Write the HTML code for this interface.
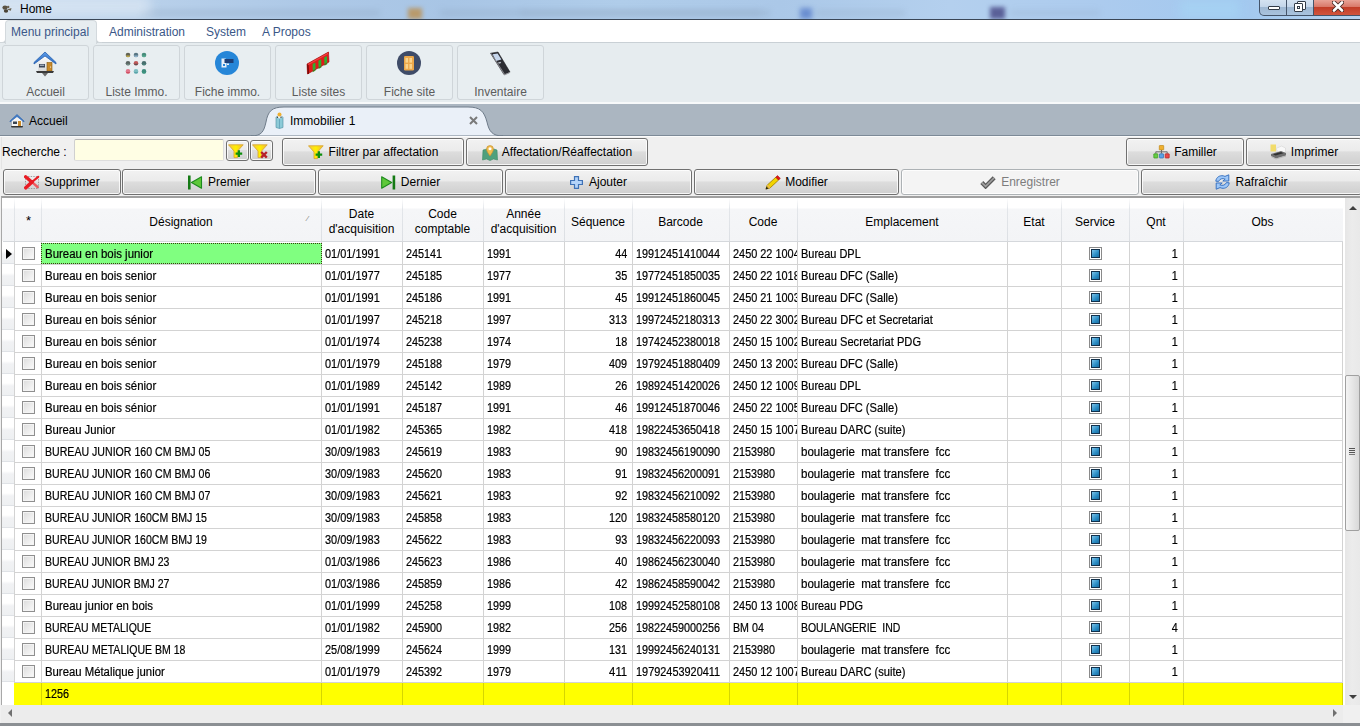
<!DOCTYPE html><html><head><meta charset="utf-8"><title>Home</title><style>*{box-sizing:border-box}
html,body{margin:0;padding:0}
body{width:1360px;height:726px;overflow:hidden;position:relative;background:#f0f0f0;font-family:"Liberation Sans",sans-serif;font-size:12px;color:#000}
div,span,svg{position:absolute}
#title{left:0;top:0;width:1360px;height:19px;background:linear-gradient(90deg,#c4d8ee 0px,#b8d0ea 150px,#aec9e7 300px,#a8c5e5 450px,#b0cdea 620px,#abc8e8 780px,#b4d0ee 950px,#accbee 1100px,#a2c8ef 1240px,#b6d3f0 1360px)}
#title .line{left:0;top:19px;width:1360px;height:1px;background:#3a4656}
#title .t{left:20px;top:2px;font-size:12px;color:#000;line-height:14px}
.wbtn{top:0;height:16px;border:1px solid #44546a;border-top:none}
#menubar{left:0;top:20px;width:1360px;height:23px;background:#fff}
.mtab{top:20px;height:23px;font-size:12px;color:#3a5788;line-height:15px;padding-top:5px}
#ribbon{left:0;top:42px;width:1360px;height:61px;background:#e6ecef;border-top:1px solid #c9d0d5}
.rbtn{top:45px;width:87px;height:55px;border:1px solid #cfd5d9;border-radius:3px;background:#e8eef1}
.rbtn .lbl{left:0;top:39px;width:85px;text-align:center;font-size:12px;color:#5c5c5c;line-height:14px}
#ribline{left:0;top:102px;width:1360px;height:2px;background:#f7f9fa}
#tabstrip{left:0;top:104px;width:1360px;height:32px;background:#abb6c1}
#tabline{left:0;top:135px;width:1360px;height:1px;background:#7d8a97}
#search{left:0;top:136px;width:1360px;height:32px;background:#f0f0f0}
.btn{border:1px solid #707070;border-radius:3px;background:linear-gradient(#f2f2f2 0,#ebebeb 45%,#dddddd 50%,#cfcfcf 100%);box-shadow:inset 0 0 0 1px rgba(255,255,255,.8)}
.btn .bl{left:0;width:100%;display:flex;justify-content:center;align-items:center;font-size:12px;line-height:14px;white-space:nowrap}
.bl>*{position:relative}
.bl svg{display:block}
.btn.dis{border-color:#adb2b5;background:#f4f4f4}
#gridbox{left:1px;top:196px;width:1359px;height:527px;border-top:2px solid #a0a0a0;border-left:1px solid #a8a8a8;background:#fff}
.hdr{background:linear-gradient(#ffffff 0,#ffffff 10px,#f5f6f8 11px,#f3f4f6 100%)}
.ht{top:198px;height:43px;text-align:center;font-size:12px;line-height:14px;padding-top:17px;color:#000}
.ht.two{padding-top:9px;line-height:15px}
.hsep{top:198px;width:1px;height:43px;background:linear-gradient(#ffffff,#e3e6ea 25%,#dcdfe3)}
.sorti{left:307px;top:214px;font-size:8px;color:#777}
.rowh{left:2px;width:12px;height:21px;background:linear-gradient(#fff 0,#fff 40%,#f1f2f4 55%,#eef0f2 100%);border-bottom:1px solid #dfe2e6}
.sel{left:41px;width:281px;height:21px;background:#80ff80;border:1px dotted #3a3a10;z-index:1}
.arrow{left:6px;width:0;height:0;border-left:6px solid #000;border-top:5.5px solid transparent;border-bottom:5.5px solid transparent}
.cb{left:22px;width:13px;height:13px;border:1px solid #8f8f8f;background:linear-gradient(135deg,#dcdcdc,#fbfbfb);box-shadow:inset 0 0 0 1px #f4f4f4}
.c{z-index:2;-webkit-text-stroke:0.2px #000;height:21px;line-height:21px;font-size:12px;white-space:nowrap;overflow:hidden;color:#000}
.tl{left:3px;top:1px;transform-origin:0 50%}
.tr{right:5px;top:1px;transform-origin:100% 50%}
.svc{left:1089px;width:13px;height:13px;border:1px solid #8a8a8a;background:#fff}
.svc::after{content:"";position:absolute;left:1px;top:1px;width:9px;height:9px;background:linear-gradient(135deg,#7cc4ea,#2a8cc4 60%,#1c6ea0);border:1px solid #10304c;box-sizing:border-box}
.hl{left:14px;width:1329px;height:1px;background:#d3d3d3}
.vl{width:1px;background:#d3d3d3}
.tot{left:14px;width:1329px;height:22px;background:#ffff00}
.vly{width:1px;height:22px;background:#d6d600}
</style></head><body><div id="title"><div style="left:0;top:0;width:1360px;height:19px;overflow:hidden"><div style="left:140px;top:10px;width:240px;height:6px;background:#8ea6c0;filter:blur(3px);opacity:.38"></div><div style="left:440px;top:10px;width:330px;height:6px;background:#8ea6c0;filter:blur(3px);opacity:.38"></div><div style="left:520px;top:10px;width:240px;height:6px;background:#8ea6c0;filter:blur(3px);opacity:.25"></div><div style="left:815px;top:10px;width:90px;height:6px;background:#8ea6c0;filter:blur(3px);opacity:.3"></div><div style="left:1010px;top:10px;width:90px;height:6px;background:#8ea6c0;filter:blur(3px);opacity:.255"></div><div style="left:408px;top:8px;width:14px;height:11px;background:#b89a6c;filter:blur(2px)"></div><div style="left:990px;top:7px;width:15px;height:12px;background:#5a6098;filter:blur(2px)"></div><div style="left:800px;top:8px;width:12px;height:11px;background:#6a8ed0;filter:blur(2.5px)"></div><div style="left:1180px;top:0;width:60px;height:19px;background:#a6d4f4;filter:blur(4px);opacity:.7"></div><div style="left:-10px;top:-4px;width:160px;height:20px;background:#dce8f4;filter:blur(6px);opacity:.75"></div></div><svg style="left:1px;top:3px" width="12" height="12" viewBox="0 0 12 12"><ellipse cx="4" cy="4.6" rx="2.6" ry="2.2" fill="#5a5244"/><ellipse cx="5" cy="8" rx="2.2" ry="1.8" fill="#4a4438"/><path d="M6 6.5 L10.5 5 L9.8 7.8 Z" fill="#6a6252"/><circle cx="7.2" cy="4" r="1.2" fill="#6a6252"/></svg><div class="t">Home</div><div class="line"></div>
<div class="wbtn" style="left:1259px;width:28px;border-radius:0 0 0 5px;background:linear-gradient(#d4e2f1 0,#c4d6ea 45%,#9fb8d3 50%,#a9c3de 100%)"><div style="left:8px;top:6px;width:12px;height:4px;background:#fff;border:1px solid #333c48;border-radius:1px"></div></div>
<div class="wbtn" style="left:1286px;width:28px;border-left:1px solid #44546a;background:linear-gradient(#d4e2f1 0,#c4d6ea 45%,#9fb8d3 50%,#a9c3de 100%)"><div style="left:10px;top:1px;width:9px;height:9px;background:#fff;border:1px solid #333c48;border-radius:1px"></div><div style="left:7px;top:3px;width:9px;height:9px;background:#fff;border:1px solid #333c48;border-radius:1px"></div><div style="left:10px;top:6px;width:3px;height:3px;border:1px solid #333c48"></div></div>
<div class="wbtn" style="left:1313px;width:48px;border-radius:0;background:linear-gradient(#e8a397 0,#d9796a 45%,#c23d28 50%,#d0553e 100%)"><svg style="left:18px;top:1px" width="12" height="11" viewBox="0 0 12 11"><path d="M2 1.5 L10 9.5 M10 1.5 L2 9.5" stroke="#4a2a26" stroke-width="4.4" stroke-linecap="round"/><path d="M2 1.5 L10 9.5 M10 1.5 L2 9.5" stroke="#fff" stroke-width="2.6" stroke-linecap="round"/></svg></div>
</div>
<div id="menubar"></div>
<div id="ribbon"></div>
<div style="left:0;top:38px;width:6px;height:5px;background:#fff;border-radius:0 0 4px 0;border-bottom:1px solid #d0d6da;border-right:1px solid #d0d6da"></div><div style="left:96px;top:38px;width:6px;height:5px;background:#fff;border-radius:0 0 0 4px;border-bottom:1px solid #d0d6da;border-left:1px solid #d0d6da"></div>
<div style="left:5px;top:20px;width:92px;height:24px;background:#e7edf0;border:1px solid #d3d9dd;border-bottom:none;border-radius:4px 4px 0 0"></div>
<div class="mtab" style="left:11px">Menu principal</div>
<div class="mtab" style="left:109px">Administration</div>
<div class="mtab" style="left:206px">System</div>
<div class="mtab" style="left:262px">A Propos</div>
<div class="rbtn" style="left:2px"><div class="lbl">Accueil</div></div>
<div class="rbtn" style="left:93px"><div class="lbl">Liste Immo.</div></div>
<div class="rbtn" style="left:184px"><div class="lbl">Fiche immo.</div></div>
<div class="rbtn" style="left:275px"><div class="lbl">Liste sites</div></div>
<div class="rbtn" style="left:366px"><div class="lbl">Fiche site</div></div>
<div class="rbtn" style="left:457px"><div class="lbl">Inventaire</div></div>
<div id="ribline"></div>
<div id="tabstrip"></div>
<div id="tabline"></div>
<div style="left:29px;top:114px;font-size:12px;line-height:14px;color:#000">Accueil</div>
<svg style="left:0;top:104px" width="520" height="33" viewBox="0 104 520 33"><path d="M251 136 C262 136 264 131 266 122 C268 111 272 107 284 107 L468 107 C480 107 484 111 487 122 C489 131 492 136 503 136 Z" fill="#eaf0f8" stroke="#6f7c8a" stroke-width="1"/></svg>
<div style="left:290px;top:114px;font-size:12px;line-height:14px;color:#000">Immobilier 1</div>
<svg style="left:469px;top:116px" width="9" height="9" viewBox="0 0 9 9"><path d="M1 1 L8 8 M8 1 L1 8" stroke="#7a7a7a" stroke-width="2"/></svg>
<div id="search"></div><div style="left:0;top:136px;width:1360px;height:1px;background:#fbfbfb"></div><div style="left:1px;top:137px;width:1px;height:32px;background:#e4e4e4"></div><div style="left:2px;top:145px;font-size:12px;line-height:14px">Recherche :</div><div style="left:74px;top:139px;width:150px;height:22px;background:#fffee4;border:1px solid #dedede;border-top-color:#b4b4b4;border-left-color:#d0d0d0;border-radius:2px"></div><div class="btn" style="left:226px;top:140px;width:23px;height:21px"><span style="left:1px;top:3px"><svg width="16" height="15" viewBox="0 0 16 15"><defs><linearGradient id="fy" x1="0" y1="0" x2="1" y2="0"><stop offset="0" stop-color="#f6c640"/><stop offset=".5" stop-color="#fff000"/><stop offset="1" stop-color="#f2b838"/></linearGradient></defs><path d="M0.5 0.8 H15.2 L9.6 7 V13.6 H6 V7 Z" fill="url(#fy)" stroke="#d9a838" stroke-width="0.9"/><path d="M7.6 9.6 H14.2 M10.9 6.3 V13" stroke="#0b8f0b" stroke-width="2.2"/></svg></span></div><div class="btn" style="left:250px;top:140px;width:23px;height:21px"><span style="left:1px;top:3px"><svg width="16" height="15" viewBox="0 0 16 15"><path d="M0.5 0.8 H15.2 L9.6 7 V13.6 H6 V7 Z" fill="url(#fy)" stroke="#d9a838" stroke-width="0.9"/><path d="M9.2 8 L14.8 13.6 M14.8 8 L9.2 13.6" stroke="#b8202a" stroke-width="2.4"/></svg></span></div><div class="btn" style="left:282px;top:138px;width:182px;height:28px"><div class="bl" style="top:0px;height:26px;padding-left:0px"><span style="width:16px;height:15px;top:0px"><svg width="16" height="15" viewBox="0 0 16 15"><defs><linearGradient id="fy" x1="0" y1="0" x2="1" y2="0"><stop offset="0" stop-color="#f6c640"/><stop offset=".5" stop-color="#fff000"/><stop offset="1" stop-color="#f2b838"/></linearGradient></defs><path d="M0.5 0.8 H15.2 L9.6 7 V13.6 H6 V7 Z" fill="url(#fy)" stroke="#d9a838" stroke-width="0.9"/><path d="M7.6 9.6 H14.2 M10.9 6.3 V13" stroke="#0b8f0b" stroke-width="2.2"/></svg></span><span style="margin-left:5px;">Filtrer par affectation</span></div></div><div class="btn" style="left:466px;top:138px;width:182px;height:28px"><div class="bl" style="top:0px;height:26px;padding-left:0px"><span style="width:16px;height:17px;top:0px"><svg width="16" height="17" viewBox="0 0 16 17"><path d="M1 6 L5 5 L8 6.5 L12 5 L15 6 L15.5 16 L11.5 15 L8 16.5 L4.5 15 L0.5 16 Z" fill="#4fa07c" stroke="#3d8a68" stroke-width="0.6"/><path d="M8 12 C6 9 4.6 7.4 4.6 5 A3.4 3.4 0 0 1 11.4 5 C11.4 7.4 10 9 8 12 Z" fill="#f0be50" stroke="#c89030" stroke-width="0.7"/><circle cx="8" cy="4.8" r="1.5" fill="#fff"/></svg></span><span style="margin-left:4px;">Affectation/Réaffectation</span></div></div><div class="btn" style="left:1126px;top:138px;width:118px;height:28px"><div class="bl" style="top:0px;height:26px;padding-left:0px"><span style="width:17px;height:14px;top:0px"><svg width="17" height="14" viewBox="0 0 17 14"><rect x="6.3" y="0.5" width="4.4" height="4.4" rx="0.4" fill="#f0b030" stroke="#c08a18" stroke-width="0.7"/><path d="M8.5 5 V6.8 M2.8 8.6 V6.8 H14.2 V8.6 M8.5 6.8 V8.6" fill="none" stroke="#606060" stroke-width="0.9"/><rect x="0.8" y="8.8" width="4" height="4.2" rx="0.4" fill="#66cc44" stroke="#3a9a20" stroke-width="0.7"/><rect x="6.5" y="8.8" width="4" height="4.2" rx="0.4" fill="#5aa2e6" stroke="#2f6fb0" stroke-width="0.7"/><rect x="12.2" y="8.8" width="4" height="4.2" rx="0.4" fill="#ea4a4a" stroke="#b02020" stroke-width="0.7"/></svg></span><span style="margin-left:4px;">Familler</span></div></div><div class="btn" style="left:1246px;top:138px;width:116px;height:28px"><div class="bl" style="top:0px;height:26px;padding-left:0px"><span style="width:17px;height:16px;top:0px"><svg width="17" height="16" viewBox="0 0 17 16"><rect x="0.5" y="0.5" width="5.5" height="7" fill="#f2dc6a"/><path d="M6 4.5 L11.5 2 L15.5 4 L15.5 8 L9 10 Z" fill="#f8f8f8" stroke="#cfcfcf" stroke-width="0.5"/><path d="M1 10 L11 7 L16 9 L16 11.5 L6 14.5 L1 12 Z" fill="#6e6e6e"/><path d="M3 10.2 L11 8 L13.5 9.2 L5.5 11.4 Z" fill="#303030"/><path d="M1 12 L6 14.5 L16 11.5 L16 12.5 L6 15.5 L1 13 Z" fill="#b8b8b8"/></svg></span><span style="margin-left:4px;">Imprimer</span></div></div><div class="btn" style="left:3px;top:169px;width:118px;height:26px"><div class="bl" style="top:0px;height:24px;padding-left:0px"><span style="width:16px;height:15px;top:0px"><svg width="16" height="15" viewBox="0 0 16 15"><rect x="1.5" y="1.5" width="13" height="12" fill="none" stroke="#8a8a8a" stroke-width="0.8" stroke-dasharray="1.4 1.2"/><path d="M1.6 1.8 L8 7.2" stroke="#e81c24" stroke-width="3.4" stroke-linecap="round"/><path d="M8 7.2 L13.6 12" stroke="#ee5a60" stroke-width="2.4" stroke-linecap="round"/><path d="M1.8 12.8 L8 7" stroke="#e81c24" stroke-width="3.6" stroke-linecap="round"/><path d="M8 7 L14.2 1.8" stroke="#e81c24" stroke-width="2.2" stroke-linecap="round"/></svg></span><span style="margin-left:4px;">Supprimer</span></div></div><div class="btn" style="left:122px;top:169px;width:194px;height:26px"><div class="bl" style="top:0px;height:24px;padding-left:0px"><span style="width:15px;height:15px;top:0px"><svg width="15" height="15" viewBox="0 0 15 15"><rect x="0" y="0.5" width="2.6" height="14" fill="#157a15"/><path d="M3.5 7.5 L13.5 1.8 L13.5 13.2 Z" fill="#5ec83a" stroke="#1d8a1d" stroke-width="1.1" stroke-linejoin="round"/></svg></span><span style="margin-left:5px;">Premier</span></div></div><div class="btn" style="left:318px;top:169px;width:185px;height:26px"><div class="bl" style="top:0px;height:24px;padding-left:0px"><span style="width:15px;height:15px;top:0px"><svg width="15" height="15" viewBox="0 0 15 15"><rect x="11.6" y="0.5" width="2.6" height="14" fill="#157a15"/><path d="M10.7 7.5 L0.7 1.8 L0.7 13.2 Z" fill="#5ec83a" stroke="#1d8a1d" stroke-width="1.1" stroke-linejoin="round"/></svg></span><span style="margin-left:5px;">Dernier</span></div></div><div class="btn" style="left:505px;top:169px;width:187px;height:26px"><div class="bl" style="top:0px;height:24px;padding-left:0px"><span style="width:13px;height:13px;top:0px"><svg width="13" height="13" viewBox="0 0 13 13"><path d="M4.5 0.6 H8.5 V4.5 H12.4 V8.5 H8.5 V12.4 H4.5 V8.5 H0.6 V4.5 H4.5 Z" fill="#b4d4fa" stroke="#3f72b6" stroke-width="1.2"/></svg></span><span style="margin-left:6px;">Ajouter</span></div></div><div class="btn" style="left:694px;top:169px;width:205px;height:26px"><div class="bl" style="top:0px;height:24px;padding-left:0px"><span style="width:16px;height:15px;top:0px"><svg width="16" height="15" viewBox="0 0 16 15"><path d="M1 14 L2.2 10.2 L10.8 2.2 L13.6 5 L5 13 Z" fill="#f2d400" stroke="#a78300" stroke-width="0.9"/><path d="M2.2 10.2 L5 13" stroke="#e6b070" stroke-width="1.2"/><path d="M10.8 2.2 L12.5 0.6 L15.3 3.4 L13.6 5 Z" fill="#e01818" stroke="#a00" stroke-width="0.6"/><path d="M0.6 14.4 L1.5 11.6 L3.4 13.5 Z" fill="#222"/></svg></span><span style="margin-left:4px;">Modifier</span></div></div><div class="btn dis" style="left:901px;top:169px;width:238px;height:26px"><div class="bl" style="top:0px;height:24px;padding-left:0px"><span style="width:16px;height:13px;top:0px"><svg width="16" height="13" viewBox="0 0 16 13"><path d="M1.8 6.6 L5.6 10.4 L14.2 1.8" fill="none" stroke="#5a5a5a" stroke-width="4.2" stroke-linejoin="miter"/><path d="M1.8 6.6 L5.6 10.4 L14.2 1.8" fill="none" stroke="#a0a0a0" stroke-width="1.6"/></svg></span><span style="margin-left:5px;color:#7d7d7d;">Enregistrer</span></div></div><div class="btn" style="left:1141px;top:169px;width:221px;height:26px"><div class="bl" style="top:0px;height:24px;padding-left:0px"><span style="width:15px;height:16px;top:0px"><svg width="15" height="16" viewBox="0 0 15 16"><path d="M0.8 7.2 C1.2 3.2 4.6 1.2 8.2 1.8 L10 2.4 L13.8 0.8 L13.8 7 L7.8 7 L10.2 5.1 C7.4 3.9 4.6 4.9 3.6 7.4 Z" fill="#9dc7f8" stroke="#3a73c1" stroke-width="1"/><path d="M14.2 8.8 C13.8 12.8 10.4 14.8 6.8 14.2 L5 13.6 L1.2 15.2 L1.2 9 L7.2 9 L4.8 10.9 C7.6 12.1 10.4 11.1 11.4 8.6 Z" fill="#9dc7f8" stroke="#3a73c1" stroke-width="1"/></svg></span><span style="margin-left:5px;">Rafraîchir</span></div></div><div id="gridbox"></div><svg style="left:33px;top:50px" width="25" height="28" viewBox="0 0 25 28"><defs><linearGradient id="hb" x1="0" y1="0" x2="0" y2="1"><stop offset="0" stop-color="#ffffff"/><stop offset="1" stop-color="#d8d8d8"/></linearGradient><linearGradient id="rf" x1="0" y1="0" x2="0" y2="1"><stop offset="0" stop-color="#5b9ae6"/><stop offset="1" stop-color="#2c6cc4"/></linearGradient></defs><path d="M5 11 L12 5.5 L19 11 V21 H5 Z" fill="url(#hb)"/><path d="M1 12.5 L12 2 L23 12.5 L23 14 L12 6 L1 14 Z" fill="url(#rf)" stroke="#2a62b0" stroke-width="0.8" stroke-linejoin="round"/><rect x="6" y="14" width="6" height="3.5" fill="#3b4658"/><rect x="6.8" y="14.7" width="4.4" height="1" fill="#c8d0dc"/><rect x="14" y="12.5" width="5" height="8.5" fill="#c98a2a" stroke="#8a5a10" stroke-width="0.6"/><circle cx="17.6" cy="17" r="0.6" fill="#fff"/><path d="M3 21 H21 L20 23 H4 Z" fill="#3a3a3a"/><path d="M9 23 H15 L12 26.5 Z" fill="#6a6a6a"/></svg><svg style="left:124px;top:51px" width="24" height="24" viewBox="0 0 24 24"><circle cx="4" cy="4.0" r="2.3" fill="#4a4a3a" opacity="0.85"/><path d="M1.9 4.6 A2.2 2.2 0 0 0 6.1 4.6 Z" fill="#e8c840" opacity="0.7"/><circle cx="12" cy="4.0" r="2.3" fill="#3f6070" opacity="0.85"/><path d="M9.9 4.6 A2.2 2.2 0 0 0 14.1 4.6 Z" fill="#a8d0f0" opacity="0.7"/><circle cx="20" cy="4.0" r="2.3" fill="#2a7a66" opacity="0.85"/><path d="M17.9 4.6 A2.2 2.2 0 0 0 22.1 4.6 Z" fill="#5ab89a" opacity="0.7"/><circle cx="4" cy="12.2" r="2.3" fill="#404a48" opacity="0.85"/><path d="M1.9 12.799999999999999 A2.2 2.2 0 0 0 6.1 12.799999999999999 Z" fill="#7a9a90" opacity="0.7"/><circle cx="12" cy="12.2" r="2.3" fill="#b83c3c" opacity="0.85"/><path d="M9.9 12.799999999999999 A2.2 2.2 0 0 0 14.1 12.799999999999999 Z" fill="#3a4a50" opacity="0.7"/><circle cx="20" cy="12.2" r="2.3" fill="#2a5656" opacity="0.85"/><path d="M17.9 12.799999999999999 A2.2 2.2 0 0 0 22.1 12.799999999999999 Z" fill="#4a8a80" opacity="0.7"/><circle cx="4" cy="20.4" r="2.3" fill="#e0607a" opacity="0.85"/><path d="M1.9 21.0 A2.2 2.2 0 0 0 6.1 21.0 Z" fill="#c84050" opacity="0.7"/><circle cx="12" cy="20.4" r="2.3" fill="#6ab4b8" opacity="0.85"/><path d="M9.9 21.0 A2.2 2.2 0 0 0 14.1 21.0 Z" fill="#4a9aa0" opacity="0.7"/><circle cx="20" cy="20.4" r="2.3" fill="#1f7a68" opacity="0.85"/><path d="M17.9 21.0 A2.2 2.2 0 0 0 22.1 21.0 Z" fill="#3a9a80" opacity="0.7"/></svg><svg style="left:214px;top:50px" width="26" height="26" viewBox="0 0 26 26"><circle cx="13" cy="13" r="12" fill="#2686d8"/><path d="M7.5 8.5 H11.5 L12.5 9.5 V17.5 H7.5 Z" fill="#e8f0f8"/><rect x="10.5" y="9" width="9" height="4" fill="#1c3f78"/><rect x="9" y="14" width="2" height="2" fill="#2686d8"/><rect x="13" y="13.5" width="2" height="1.5" fill="#e8f0f8"/></svg><svg style="left:305px;top:50px" width="26" height="26" viewBox="0 0 26 26"><path d="M2 14 L23.5 2 L24 12 L2.5 24 Z" fill="#e01a1a"/><path d="M2 14 L23.5 2 L24 3.5 L3.5 15 Z" fill="#f24040"/><path d="M2 14 L3.5 15 L4 24 L2.5 24 Z" fill="#6a0808"/><path d="M7.6 14 L10.4 12.5 L10.6 20.6 L7.8 22.2 Z" fill="#2fae2f"/><path d="M13.4 10.8 L16.2 9.3 L16.4 17.4 L13.6 19 Z" fill="#2fae2f"/><path d="M19.2 7.6 L22 6.1 L22.2 14.2 L19.4 15.8 Z" fill="#2fae2f"/><path d="M2 14 L23.5 2 L24 12 L2.5 24 Z" fill="none" stroke="#9a0c0c" stroke-width="0.6"/></svg><svg style="left:396px;top:50px" width="26" height="26" viewBox="0 0 26 26"><circle cx="13" cy="13" r="12" fill="#3f4c68"/><rect x="8" y="6" width="10" height="14.5" rx="1.2" fill="#eda84a"/><rect x="9.5" y="8" width="2.6" height="4.6" fill="#fbd48c"/><rect x="13.4" y="8" width="2.6" height="4.6" fill="#fbd48c"/><rect x="9.5" y="14" width="2.6" height="4.8" fill="#fbd48c"/><rect x="13.4" y="14" width="2.6" height="4.8" fill="#fbd48c"/></svg><svg style="left:488px;top:50px" width="24" height="26" viewBox="0 0 24 26"><path d="M2.5 3.2 L10 2 L22 22 L16 24.6 Z" fill="#2c2c32" stroke="#141418" stroke-width="0.5"/><path d="M4.6 4.2 L9.6 3.4 L13.4 9.6 L8 11 Z" fill="#c6d6ec"/><path d="M2.5 3.2 L3.6 3.6 L17 24.2 L16 24.6 Z" fill="#8a8a90"/><path d="M10 12.5 L12.5 11.8 L13.2 13 L10.8 13.8 Z" fill="#bfc4cc"/><path d="M16 24.6 L22 22 L22.3 22.8 L16.4 25.4 Z" fill="#9a9aa0"/></svg><svg style="left:9px;top:113px" width="16" height="16" viewBox="0 0 16 16"><path d="M3 7 L8 3 L13 7 V13 H3 Z" fill="#f4f4f4"/><path d="M1 8 L8 1.5 L15 8 L15 9 L8 3.5 L1 9 Z" fill="#3f7fd0" stroke="#2a5fa8" stroke-width="0.6"/><rect x="4" y="8.5" width="4" height="2.5" fill="#3a4450"/><rect x="9" y="8" width="3" height="5" fill="#c98a2a"/><path d="M2 13 H14 L13.5 14.5 H2.5 Z" fill="#333"/></svg><svg style="left:274px;top:112px" width="11" height="17" viewBox="0 0 11 17"><path d="M2 5 L5.5 3.5 L9 5 V15.5 L5.5 16.5 L2 15.5 Z" fill="#8ccad8" stroke="#4a8aa0" stroke-width="0.6"/><path d="M5.5 6.5 V16.5" stroke="#5fa0b8" stroke-width="0.8"/><path d="M2 5 L5.5 6.5 L9 5 L5.5 3.5 Z" fill="#f0f4f4"/><circle cx="5.5" cy="2.5" r="2" fill="#f0b030"/><circle cx="3.5" cy="5.2" r="0.7" fill="#333"/><circle cx="7" cy="5.2" r="0.7" fill="#333"/></svg><div id="grid"><div class="hdr" style="left:2px;top:198px;width:1341px;height:43px"></div><div class="ht" style="left:14px;width:27px"><span style='font-size:13px;position:relative;top:-1px;left:1px'>*</span></div><div class="ht" style="left:41px;width:280px">Désignation</div><div class="ht two" style="left:321px;width:81px">Date<br>d'acquisition</div><div class="ht two" style="left:402px;width:81px">Code<br>comptable</div><div class="ht two" style="left:483px;width:81px">Année<br>d'acquisition</div><div class="ht" style="left:564px;width:68px">Séquence</div><div class="ht" style="left:632px;width:97px">Barcode</div><div class="ht" style="left:729px;width:68px">Code</div><div class="ht" style="left:797px;width:210px">Emplacement</div><div class="ht" style="left:1007px;width:54px">Etat</div><div class="ht" style="left:1061px;width:68px">Service</div><div class="ht" style="left:1129px;width:54px">Qnt</div><div class="ht" style="left:1183px;width:159px">Obs</div><div class="hsep" style="left:14px"></div><div class="hsep" style="left:41px"></div><div class="hsep" style="left:321px"></div><div class="hsep" style="left:402px"></div><div class="hsep" style="left:483px"></div><div class="hsep" style="left:564px"></div><div class="hsep" style="left:632px"></div><div class="hsep" style="left:729px"></div><div class="hsep" style="left:797px"></div><div class="hsep" style="left:1007px"></div><div class="hsep" style="left:1061px"></div><div class="hsep" style="left:1129px"></div><div class="hsep" style="left:1183px"></div><div class="sorti">&#8260;</div><div class="rowh" style="top:243px"></div><div class="sel" style="top:243px"></div><div class="arrow" style="top:249px"></div><div class="cb" style="top:247px"></div><div class="c" style="left:42px;top:243px;width:279px"><span class="tl" style="transform:scaleX(0.953)">Bureau en bois junior</span></div><div class="c" style="left:322px;top:243px;width:80px"><span class="tl" style="transform:scaleX(0.911)">01/01/1991</span></div><div class="c" style="left:403px;top:243px;width:80px"><span class="tl" style="transform:scaleX(0.900)">245141</span></div><div class="c" style="left:484px;top:243px;width:80px"><span class="tl" style="transform:scaleX(0.900)">1991</span></div><div class="c" style="left:565px;top:243px;width:67px"><span class="tr" style="transform:scaleX(0.900)">44</span></div><div class="c" style="left:633px;top:243px;width:96px"><span class="tl" style="transform:scaleX(0.900)">19912451410044</span></div><div class="c" style="left:730px;top:243px;width:67px"><span class="tl" style="transform:scaleX(0.909)">2450 22 1004</span></div><div class="c" style="left:798px;top:243px;width:209px"><span class="tl" style="transform:scaleX(0.914)">Bureau DPL</span></div><div class="c" style="left:1130px;top:243px;width:53px"><span class="tr" style="transform:scaleX(0.900)">1</span></div><div class="svc" style="top:247px"></div><div class="hl" style="top:264px"></div><div class="rowh" style="top:265px"></div><div class="cb" style="top:269px"></div><div class="c" style="left:42px;top:265px;width:279px"><span class="tl" style="transform:scaleX(0.953)">Bureau en bois senior</span></div><div class="c" style="left:322px;top:265px;width:80px"><span class="tl" style="transform:scaleX(0.911)">01/01/1977</span></div><div class="c" style="left:403px;top:265px;width:80px"><span class="tl" style="transform:scaleX(0.900)">245185</span></div><div class="c" style="left:484px;top:265px;width:80px"><span class="tl" style="transform:scaleX(0.900)">1977</span></div><div class="c" style="left:565px;top:265px;width:67px"><span class="tr" style="transform:scaleX(0.900)">35</span></div><div class="c" style="left:633px;top:265px;width:96px"><span class="tl" style="transform:scaleX(0.900)">19772451850035</span></div><div class="c" style="left:730px;top:265px;width:67px"><span class="tl" style="transform:scaleX(0.909)">2450 22 1018</span></div><div class="c" style="left:798px;top:265px;width:209px"><span class="tl" style="transform:scaleX(0.926)">Bureau DFC (Salle)</span></div><div class="c" style="left:1130px;top:265px;width:53px"><span class="tr" style="transform:scaleX(0.900)">1</span></div><div class="svc" style="top:269px"></div><div class="hl" style="top:286px"></div><div class="rowh" style="top:287px"></div><div class="cb" style="top:291px"></div><div class="c" style="left:42px;top:287px;width:279px"><span class="tl" style="transform:scaleX(0.953)">Bureau en bois senior</span></div><div class="c" style="left:322px;top:287px;width:80px"><span class="tl" style="transform:scaleX(0.911)">01/01/1991</span></div><div class="c" style="left:403px;top:287px;width:80px"><span class="tl" style="transform:scaleX(0.900)">245186</span></div><div class="c" style="left:484px;top:287px;width:80px"><span class="tl" style="transform:scaleX(0.900)">1991</span></div><div class="c" style="left:565px;top:287px;width:67px"><span class="tr" style="transform:scaleX(0.900)">45</span></div><div class="c" style="left:633px;top:287px;width:96px"><span class="tl" style="transform:scaleX(0.900)">19912451860045</span></div><div class="c" style="left:730px;top:287px;width:67px"><span class="tl" style="transform:scaleX(0.909)">2450 21 1003</span></div><div class="c" style="left:798px;top:287px;width:209px"><span class="tl" style="transform:scaleX(0.926)">Bureau DFC (Salle)</span></div><div class="c" style="left:1130px;top:287px;width:53px"><span class="tr" style="transform:scaleX(0.900)">1</span></div><div class="svc" style="top:291px"></div><div class="hl" style="top:308px"></div><div class="rowh" style="top:309px"></div><div class="cb" style="top:313px"></div><div class="c" style="left:42px;top:309px;width:279px"><span class="tl" style="transform:scaleX(0.953)">Bureau en bois sénior</span></div><div class="c" style="left:322px;top:309px;width:80px"><span class="tl" style="transform:scaleX(0.911)">01/01/1997</span></div><div class="c" style="left:403px;top:309px;width:80px"><span class="tl" style="transform:scaleX(0.900)">245218</span></div><div class="c" style="left:484px;top:309px;width:80px"><span class="tl" style="transform:scaleX(0.900)">1997</span></div><div class="c" style="left:565px;top:309px;width:67px"><span class="tr" style="transform:scaleX(0.900)">313</span></div><div class="c" style="left:633px;top:309px;width:96px"><span class="tl" style="transform:scaleX(0.900)">19972452180313</span></div><div class="c" style="left:730px;top:309px;width:67px"><span class="tl" style="transform:scaleX(0.909)">2450 22 3002</span></div><div class="c" style="left:798px;top:309px;width:209px"><span class="tl" style="transform:scaleX(0.932)">Bureau DFC et Secretariat</span></div><div class="c" style="left:1130px;top:309px;width:53px"><span class="tr" style="transform:scaleX(0.900)">1</span></div><div class="svc" style="top:313px"></div><div class="hl" style="top:330px"></div><div class="rowh" style="top:331px"></div><div class="cb" style="top:335px"></div><div class="c" style="left:42px;top:331px;width:279px"><span class="tl" style="transform:scaleX(0.953)">Bureau en bois sénior</span></div><div class="c" style="left:322px;top:331px;width:80px"><span class="tl" style="transform:scaleX(0.911)">01/01/1974</span></div><div class="c" style="left:403px;top:331px;width:80px"><span class="tl" style="transform:scaleX(0.900)">245238</span></div><div class="c" style="left:484px;top:331px;width:80px"><span class="tl" style="transform:scaleX(0.900)">1974</span></div><div class="c" style="left:565px;top:331px;width:67px"><span class="tr" style="transform:scaleX(0.900)">18</span></div><div class="c" style="left:633px;top:331px;width:96px"><span class="tl" style="transform:scaleX(0.900)">19742452380018</span></div><div class="c" style="left:730px;top:331px;width:67px"><span class="tl" style="transform:scaleX(0.909)">2450 15 1002</span></div><div class="c" style="left:798px;top:331px;width:209px"><span class="tl" style="transform:scaleX(0.928)">Bureau Secretariat PDG</span></div><div class="c" style="left:1130px;top:331px;width:53px"><span class="tr" style="transform:scaleX(0.900)">1</span></div><div class="svc" style="top:335px"></div><div class="hl" style="top:352px"></div><div class="rowh" style="top:353px"></div><div class="cb" style="top:357px"></div><div class="c" style="left:42px;top:353px;width:279px"><span class="tl" style="transform:scaleX(0.953)">Bureau en bois senior</span></div><div class="c" style="left:322px;top:353px;width:80px"><span class="tl" style="transform:scaleX(0.911)">01/01/1979</span></div><div class="c" style="left:403px;top:353px;width:80px"><span class="tl" style="transform:scaleX(0.900)">245188</span></div><div class="c" style="left:484px;top:353px;width:80px"><span class="tl" style="transform:scaleX(0.900)">1979</span></div><div class="c" style="left:565px;top:353px;width:67px"><span class="tr" style="transform:scaleX(0.900)">409</span></div><div class="c" style="left:633px;top:353px;width:96px"><span class="tl" style="transform:scaleX(0.900)">19792451880409</span></div><div class="c" style="left:730px;top:353px;width:67px"><span class="tl" style="transform:scaleX(0.909)">2450 13 2003</span></div><div class="c" style="left:798px;top:353px;width:209px"><span class="tl" style="transform:scaleX(0.926)">Bureau DFC (Salle)</span></div><div class="c" style="left:1130px;top:353px;width:53px"><span class="tr" style="transform:scaleX(0.900)">1</span></div><div class="svc" style="top:357px"></div><div class="hl" style="top:374px"></div><div class="rowh" style="top:375px"></div><div class="cb" style="top:379px"></div><div class="c" style="left:42px;top:375px;width:279px"><span class="tl" style="transform:scaleX(0.953)">Bureau en bois sénior</span></div><div class="c" style="left:322px;top:375px;width:80px"><span class="tl" style="transform:scaleX(0.911)">01/01/1989</span></div><div class="c" style="left:403px;top:375px;width:80px"><span class="tl" style="transform:scaleX(0.900)">245142</span></div><div class="c" style="left:484px;top:375px;width:80px"><span class="tl" style="transform:scaleX(0.900)">1989</span></div><div class="c" style="left:565px;top:375px;width:67px"><span class="tr" style="transform:scaleX(0.900)">26</span></div><div class="c" style="left:633px;top:375px;width:96px"><span class="tl" style="transform:scaleX(0.900)">19892451420026</span></div><div class="c" style="left:730px;top:375px;width:67px"><span class="tl" style="transform:scaleX(0.909)">2450 12 1009</span></div><div class="c" style="left:798px;top:375px;width:209px"><span class="tl" style="transform:scaleX(0.914)">Bureau DPL</span></div><div class="c" style="left:1130px;top:375px;width:53px"><span class="tr" style="transform:scaleX(0.900)">1</span></div><div class="svc" style="top:379px"></div><div class="hl" style="top:396px"></div><div class="rowh" style="top:397px"></div><div class="cb" style="top:401px"></div><div class="c" style="left:42px;top:397px;width:279px"><span class="tl" style="transform:scaleX(0.953)">Bureau en bois sénior</span></div><div class="c" style="left:322px;top:397px;width:80px"><span class="tl" style="transform:scaleX(0.911)">01/01/1991</span></div><div class="c" style="left:403px;top:397px;width:80px"><span class="tl" style="transform:scaleX(0.900)">245187</span></div><div class="c" style="left:484px;top:397px;width:80px"><span class="tl" style="transform:scaleX(0.900)">1991</span></div><div class="c" style="left:565px;top:397px;width:67px"><span class="tr" style="transform:scaleX(0.900)">46</span></div><div class="c" style="left:633px;top:397px;width:96px"><span class="tl" style="transform:scaleX(0.900)">19912451870046</span></div><div class="c" style="left:730px;top:397px;width:67px"><span class="tl" style="transform:scaleX(0.909)">2450 22 1005</span></div><div class="c" style="left:798px;top:397px;width:209px"><span class="tl" style="transform:scaleX(0.926)">Bureau DFC (Salle)</span></div><div class="c" style="left:1130px;top:397px;width:53px"><span class="tr" style="transform:scaleX(0.900)">1</span></div><div class="svc" style="top:401px"></div><div class="hl" style="top:418px"></div><div class="rowh" style="top:419px"></div><div class="cb" style="top:423px"></div><div class="c" style="left:42px;top:419px;width:279px"><span class="tl" style="transform:scaleX(0.941)">Bureau Junior</span></div><div class="c" style="left:322px;top:419px;width:80px"><span class="tl" style="transform:scaleX(0.911)">01/01/1982</span></div><div class="c" style="left:403px;top:419px;width:80px"><span class="tl" style="transform:scaleX(0.900)">245365</span></div><div class="c" style="left:484px;top:419px;width:80px"><span class="tl" style="transform:scaleX(0.900)">1982</span></div><div class="c" style="left:565px;top:419px;width:67px"><span class="tr" style="transform:scaleX(0.900)">418</span></div><div class="c" style="left:633px;top:419px;width:96px"><span class="tl" style="transform:scaleX(0.900)">19822453650418</span></div><div class="c" style="left:730px;top:419px;width:67px"><span class="tl" style="transform:scaleX(0.909)">2450 15 1007</span></div><div class="c" style="left:798px;top:419px;width:209px"><span class="tl" style="transform:scaleX(0.927)">Bureau DARC (suite)</span></div><div class="c" style="left:1130px;top:419px;width:53px"><span class="tr" style="transform:scaleX(0.900)">1</span></div><div class="svc" style="top:423px"></div><div class="hl" style="top:440px"></div><div class="rowh" style="top:441px"></div><div class="cb" style="top:445px"></div><div class="c" style="left:42px;top:441px;width:279px"><span class="tl" style="transform:scaleX(0.882)">BUREAU JUNIOR 160 CM BMJ 05</span></div><div class="c" style="left:322px;top:441px;width:80px"><span class="tl" style="transform:scaleX(0.911)">30/09/1983</span></div><div class="c" style="left:403px;top:441px;width:80px"><span class="tl" style="transform:scaleX(0.900)">245619</span></div><div class="c" style="left:484px;top:441px;width:80px"><span class="tl" style="transform:scaleX(0.900)">1983</span></div><div class="c" style="left:565px;top:441px;width:67px"><span class="tr" style="transform:scaleX(0.900)">90</span></div><div class="c" style="left:633px;top:441px;width:96px"><span class="tl" style="transform:scaleX(0.900)">19832456190090</span></div><div class="c" style="left:730px;top:441px;width:67px"><span class="tl" style="transform:scaleX(0.900)">2153980</span></div><div class="c" style="left:798px;top:441px;width:209px"><span class="tl" style="transform:scaleX(0.961)">boulagerie&nbsp; mat transfere&nbsp; fcc</span></div><div class="c" style="left:1130px;top:441px;width:53px"><span class="tr" style="transform:scaleX(0.900)">1</span></div><div class="svc" style="top:445px"></div><div class="hl" style="top:462px"></div><div class="rowh" style="top:463px"></div><div class="cb" style="top:467px"></div><div class="c" style="left:42px;top:463px;width:279px"><span class="tl" style="transform:scaleX(0.882)">BUREAU JUNIOR 160 CM BMJ 06</span></div><div class="c" style="left:322px;top:463px;width:80px"><span class="tl" style="transform:scaleX(0.911)">30/09/1983</span></div><div class="c" style="left:403px;top:463px;width:80px"><span class="tl" style="transform:scaleX(0.900)">245620</span></div><div class="c" style="left:484px;top:463px;width:80px"><span class="tl" style="transform:scaleX(0.900)">1983</span></div><div class="c" style="left:565px;top:463px;width:67px"><span class="tr" style="transform:scaleX(0.900)">91</span></div><div class="c" style="left:633px;top:463px;width:96px"><span class="tl" style="transform:scaleX(0.900)">19832456200091</span></div><div class="c" style="left:730px;top:463px;width:67px"><span class="tl" style="transform:scaleX(0.900)">2153980</span></div><div class="c" style="left:798px;top:463px;width:209px"><span class="tl" style="transform:scaleX(0.961)">boulagerie&nbsp; mat transfere&nbsp; fcc</span></div><div class="c" style="left:1130px;top:463px;width:53px"><span class="tr" style="transform:scaleX(0.900)">1</span></div><div class="svc" style="top:467px"></div><div class="hl" style="top:484px"></div><div class="rowh" style="top:485px"></div><div class="cb" style="top:489px"></div><div class="c" style="left:42px;top:485px;width:279px"><span class="tl" style="transform:scaleX(0.882)">BUREAU JUNIOR 160 CM BMJ 07</span></div><div class="c" style="left:322px;top:485px;width:80px"><span class="tl" style="transform:scaleX(0.911)">30/09/1983</span></div><div class="c" style="left:403px;top:485px;width:80px"><span class="tl" style="transform:scaleX(0.900)">245621</span></div><div class="c" style="left:484px;top:485px;width:80px"><span class="tl" style="transform:scaleX(0.900)">1983</span></div><div class="c" style="left:565px;top:485px;width:67px"><span class="tr" style="transform:scaleX(0.900)">92</span></div><div class="c" style="left:633px;top:485px;width:96px"><span class="tl" style="transform:scaleX(0.900)">19832456210092</span></div><div class="c" style="left:730px;top:485px;width:67px"><span class="tl" style="transform:scaleX(0.900)">2153980</span></div><div class="c" style="left:798px;top:485px;width:209px"><span class="tl" style="transform:scaleX(0.961)">boulagerie&nbsp; mat transfere&nbsp; fcc</span></div><div class="c" style="left:1130px;top:485px;width:53px"><span class="tr" style="transform:scaleX(0.900)">1</span></div><div class="svc" style="top:489px"></div><div class="hl" style="top:506px"></div><div class="rowh" style="top:507px"></div><div class="cb" style="top:511px"></div><div class="c" style="left:42px;top:507px;width:279px"><span class="tl" style="transform:scaleX(0.880)">BUREAU JUNIOR 160CM BMJ 15</span></div><div class="c" style="left:322px;top:507px;width:80px"><span class="tl" style="transform:scaleX(0.911)">30/09/1983</span></div><div class="c" style="left:403px;top:507px;width:80px"><span class="tl" style="transform:scaleX(0.900)">245858</span></div><div class="c" style="left:484px;top:507px;width:80px"><span class="tl" style="transform:scaleX(0.900)">1983</span></div><div class="c" style="left:565px;top:507px;width:67px"><span class="tr" style="transform:scaleX(0.900)">120</span></div><div class="c" style="left:633px;top:507px;width:96px"><span class="tl" style="transform:scaleX(0.900)">19832458580120</span></div><div class="c" style="left:730px;top:507px;width:67px"><span class="tl" style="transform:scaleX(0.900)">2153980</span></div><div class="c" style="left:798px;top:507px;width:209px"><span class="tl" style="transform:scaleX(0.961)">boulagerie&nbsp; mat transfere&nbsp; fcc</span></div><div class="c" style="left:1130px;top:507px;width:53px"><span class="tr" style="transform:scaleX(0.900)">1</span></div><div class="svc" style="top:511px"></div><div class="hl" style="top:528px"></div><div class="rowh" style="top:529px"></div><div class="cb" style="top:533px"></div><div class="c" style="left:42px;top:529px;width:279px"><span class="tl" style="transform:scaleX(0.880)">BUREAU JUNIOR 160CM BMJ 19</span></div><div class="c" style="left:322px;top:529px;width:80px"><span class="tl" style="transform:scaleX(0.911)">30/09/1983</span></div><div class="c" style="left:403px;top:529px;width:80px"><span class="tl" style="transform:scaleX(0.900)">245622</span></div><div class="c" style="left:484px;top:529px;width:80px"><span class="tl" style="transform:scaleX(0.900)">1983</span></div><div class="c" style="left:565px;top:529px;width:67px"><span class="tr" style="transform:scaleX(0.900)">93</span></div><div class="c" style="left:633px;top:529px;width:96px"><span class="tl" style="transform:scaleX(0.900)">19832456220093</span></div><div class="c" style="left:730px;top:529px;width:67px"><span class="tl" style="transform:scaleX(0.900)">2153980</span></div><div class="c" style="left:798px;top:529px;width:209px"><span class="tl" style="transform:scaleX(0.961)">boulagerie&nbsp; mat transfere&nbsp; fcc</span></div><div class="c" style="left:1130px;top:529px;width:53px"><span class="tr" style="transform:scaleX(0.900)">1</span></div><div class="svc" style="top:533px"></div><div class="hl" style="top:550px"></div><div class="rowh" style="top:551px"></div><div class="cb" style="top:555px"></div><div class="c" style="left:42px;top:551px;width:279px"><span class="tl" style="transform:scaleX(0.876)">BUREAU JUNIOR BMJ 23</span></div><div class="c" style="left:322px;top:551px;width:80px"><span class="tl" style="transform:scaleX(0.911)">01/03/1986</span></div><div class="c" style="left:403px;top:551px;width:80px"><span class="tl" style="transform:scaleX(0.900)">245623</span></div><div class="c" style="left:484px;top:551px;width:80px"><span class="tl" style="transform:scaleX(0.900)">1986</span></div><div class="c" style="left:565px;top:551px;width:67px"><span class="tr" style="transform:scaleX(0.900)">40</span></div><div class="c" style="left:633px;top:551px;width:96px"><span class="tl" style="transform:scaleX(0.900)">19862456230040</span></div><div class="c" style="left:730px;top:551px;width:67px"><span class="tl" style="transform:scaleX(0.900)">2153980</span></div><div class="c" style="left:798px;top:551px;width:209px"><span class="tl" style="transform:scaleX(0.961)">boulagerie&nbsp; mat transfere&nbsp; fcc</span></div><div class="c" style="left:1130px;top:551px;width:53px"><span class="tr" style="transform:scaleX(0.900)">1</span></div><div class="svc" style="top:555px"></div><div class="hl" style="top:572px"></div><div class="rowh" style="top:573px"></div><div class="cb" style="top:577px"></div><div class="c" style="left:42px;top:573px;width:279px"><span class="tl" style="transform:scaleX(0.876)">BUREAU JUNIOR BMJ 27</span></div><div class="c" style="left:322px;top:573px;width:80px"><span class="tl" style="transform:scaleX(0.911)">01/03/1986</span></div><div class="c" style="left:403px;top:573px;width:80px"><span class="tl" style="transform:scaleX(0.900)">245859</span></div><div class="c" style="left:484px;top:573px;width:80px"><span class="tl" style="transform:scaleX(0.900)">1986</span></div><div class="c" style="left:565px;top:573px;width:67px"><span class="tr" style="transform:scaleX(0.900)">42</span></div><div class="c" style="left:633px;top:573px;width:96px"><span class="tl" style="transform:scaleX(0.900)">19862458590042</span></div><div class="c" style="left:730px;top:573px;width:67px"><span class="tl" style="transform:scaleX(0.900)">2153980</span></div><div class="c" style="left:798px;top:573px;width:209px"><span class="tl" style="transform:scaleX(0.961)">boulagerie&nbsp; mat transfere&nbsp; fcc</span></div><div class="c" style="left:1130px;top:573px;width:53px"><span class="tr" style="transform:scaleX(0.900)">1</span></div><div class="svc" style="top:577px"></div><div class="hl" style="top:594px"></div><div class="rowh" style="top:595px"></div><div class="cb" style="top:599px"></div><div class="c" style="left:42px;top:595px;width:279px"><span class="tl" style="transform:scaleX(0.953)">Bureau junior en bois</span></div><div class="c" style="left:322px;top:595px;width:80px"><span class="tl" style="transform:scaleX(0.911)">01/01/1999</span></div><div class="c" style="left:403px;top:595px;width:80px"><span class="tl" style="transform:scaleX(0.900)">245258</span></div><div class="c" style="left:484px;top:595px;width:80px"><span class="tl" style="transform:scaleX(0.900)">1999</span></div><div class="c" style="left:565px;top:595px;width:67px"><span class="tr" style="transform:scaleX(0.900)">108</span></div><div class="c" style="left:633px;top:595px;width:96px"><span class="tl" style="transform:scaleX(0.900)">19992452580108</span></div><div class="c" style="left:730px;top:595px;width:67px"><span class="tl" style="transform:scaleX(0.909)">2450 13 1008</span></div><div class="c" style="left:798px;top:595px;width:209px"><span class="tl" style="transform:scaleX(0.912)">Bureau PDG</span></div><div class="c" style="left:1130px;top:595px;width:53px"><span class="tr" style="transform:scaleX(0.900)">1</span></div><div class="svc" style="top:599px"></div><div class="hl" style="top:616px"></div><div class="rowh" style="top:617px"></div><div class="cb" style="top:621px"></div><div class="c" style="left:42px;top:617px;width:279px"><span class="tl" style="transform:scaleX(0.873)">BUREAU METALIQUE</span></div><div class="c" style="left:322px;top:617px;width:80px"><span class="tl" style="transform:scaleX(0.911)">01/01/1982</span></div><div class="c" style="left:403px;top:617px;width:80px"><span class="tl" style="transform:scaleX(0.900)">245900</span></div><div class="c" style="left:484px;top:617px;width:80px"><span class="tl" style="transform:scaleX(0.900)">1982</span></div><div class="c" style="left:565px;top:617px;width:67px"><span class="tr" style="transform:scaleX(0.900)">256</span></div><div class="c" style="left:633px;top:617px;width:96px"><span class="tl" style="transform:scaleX(0.900)">19822459000256</span></div><div class="c" style="left:730px;top:617px;width:67px"><span class="tl" style="transform:scaleX(0.890)">BM 04</span></div><div class="c" style="left:798px;top:617px;width:209px"><span class="tl" style="transform:scaleX(0.871)">BOULANGERIE&nbsp; IND</span></div><div class="c" style="left:1130px;top:617px;width:53px"><span class="tr" style="transform:scaleX(0.900)">4</span></div><div class="svc" style="top:621px"></div><div class="hl" style="top:638px"></div><div class="rowh" style="top:639px"></div><div class="cb" style="top:643px"></div><div class="c" style="left:42px;top:639px;width:279px"><span class="tl" style="transform:scaleX(0.879)">BUREAU METALIQUE BM 18</span></div><div class="c" style="left:322px;top:639px;width:80px"><span class="tl" style="transform:scaleX(0.911)">25/08/1999</span></div><div class="c" style="left:403px;top:639px;width:80px"><span class="tl" style="transform:scaleX(0.900)">245624</span></div><div class="c" style="left:484px;top:639px;width:80px"><span class="tl" style="transform:scaleX(0.900)">1999</span></div><div class="c" style="left:565px;top:639px;width:67px"><span class="tr" style="transform:scaleX(0.900)">131</span></div><div class="c" style="left:633px;top:639px;width:96px"><span class="tl" style="transform:scaleX(0.900)">19992456240131</span></div><div class="c" style="left:730px;top:639px;width:67px"><span class="tl" style="transform:scaleX(0.900)">2153980</span></div><div class="c" style="left:798px;top:639px;width:209px"><span class="tl" style="transform:scaleX(0.961)">boulagerie&nbsp; mat transfere&nbsp; fcc</span></div><div class="c" style="left:1130px;top:639px;width:53px"><span class="tr" style="transform:scaleX(0.900)">1</span></div><div class="svc" style="top:643px"></div><div class="hl" style="top:660px"></div><div class="rowh" style="top:661px"></div><div class="cb" style="top:665px"></div><div class="c" style="left:42px;top:661px;width:279px"><span class="tl" style="transform:scaleX(0.945)">Bureau Métalique junior</span></div><div class="c" style="left:322px;top:661px;width:80px"><span class="tl" style="transform:scaleX(0.911)">01/01/1979</span></div><div class="c" style="left:403px;top:661px;width:80px"><span class="tl" style="transform:scaleX(0.900)">245392</span></div><div class="c" style="left:484px;top:661px;width:80px"><span class="tl" style="transform:scaleX(0.900)">1979</span></div><div class="c" style="left:565px;top:661px;width:67px"><span class="tr" style="transform:scaleX(0.942)">411</span></div><div class="c" style="left:633px;top:661px;width:96px"><span class="tl" style="transform:scaleX(0.909)">19792453920411</span></div><div class="c" style="left:730px;top:661px;width:67px"><span class="tl" style="transform:scaleX(0.909)">2450 12 1007</span></div><div class="c" style="left:798px;top:661px;width:209px"><span class="tl" style="transform:scaleX(0.927)">Bureau DARC (suite)</span></div><div class="c" style="left:1130px;top:661px;width:53px"><span class="tr" style="transform:scaleX(0.900)">1</span></div><div class="svc" style="top:665px"></div><div class="hl" style="top:682px"></div><div class="tot" style="top:683px"></div><div class="c" style="left:42px;top:683px;width:279px"><span class="tl" style="transform:scaleX(0.900)">1256</span></div><div class="vl" style="left:14px;top:242px;height:441px"></div><div class="vl" style="left:41px;top:242px;height:441px"></div><div class="vl" style="left:321px;top:242px;height:441px"></div><div class="vl" style="left:402px;top:242px;height:441px"></div><div class="vl" style="left:483px;top:242px;height:441px"></div><div class="vl" style="left:564px;top:242px;height:441px"></div><div class="vl" style="left:632px;top:242px;height:441px"></div><div class="vl" style="left:729px;top:242px;height:441px"></div><div class="vl" style="left:797px;top:242px;height:441px"></div><div class="vl" style="left:1007px;top:242px;height:441px"></div><div class="vl" style="left:1061px;top:242px;height:441px"></div><div class="vl" style="left:1129px;top:242px;height:441px"></div><div class="vl" style="left:1183px;top:242px;height:441px"></div><div class="vl" style="left:1342px;top:242px;height:441px"></div><div class="vly" style="left:41px;top:683px"></div><div class="vly" style="left:321px;top:683px"></div><div class="vly" style="left:402px;top:683px"></div><div class="vly" style="left:483px;top:683px"></div><div class="vly" style="left:564px;top:683px"></div><div class="vly" style="left:632px;top:683px"></div><div class="vly" style="left:729px;top:683px"></div><div class="vly" style="left:797px;top:683px"></div><div class="vly" style="left:1007px;top:683px"></div><div class="vly" style="left:1061px;top:683px"></div><div class="vly" style="left:1129px;top:683px"></div><div class="vly" style="left:1183px;top:683px"></div><div class="vly" style="left:1342px;top:683px"></div><div class="hl" style="top:241px;left:3px;width:1340px;background:#d5d8dc"></div></div><div style="left:1343px;top:198px;width:17px;height:507px;background:linear-gradient(90deg,#ffffff 0,#ffffff 2px,#e6e6e6 2px,#ececec 9px,#e9e9e9 100%)"></div>
<div style="left:1345px;top:375px;width:15px;height:156px;border:1px solid #a0a0a0;border-radius:2px;background:linear-gradient(90deg,#f4f4f4,#e6e6e6 50%,#d8d8d8)"></div><div style="left:1349px;top:448px;width:6px;height:1px;background:#555"></div><div style="left:1349px;top:450px;width:6px;height:1px;background:#555"></div><div style="left:1349px;top:452px;width:6px;height:1px;background:#555"></div><div style="left:1349px;top:454px;width:6px;height:1px;background:#777"></div>
<div style="left:1349px;top:206px;width:0;height:0;border-bottom:4px solid #404040;border-left:4px solid transparent;border-right:4px solid transparent"></div>
<div style="left:1349px;top:695px;width:0;height:0;border-top:4px solid #404040;border-left:4px solid transparent;border-right:4px solid transparent"></div>
<div style="left:1px;top:705px;width:1342px;height:18px;background:#ececec"></div>
<div style="left:8px;top:709px;width:0;height:0;border-right:4px solid #707070;border-top:4px solid transparent;border-bottom:4px solid transparent"></div>
<div style="left:1333px;top:709px;width:0;height:0;border-left:4px solid #707070;border-top:4px solid transparent;border-bottom:4px solid transparent"></div>
<div style="left:1343px;top:705px;width:17px;height:18px;background:#f0f0f0"></div>
<div style="left:0;top:723px;width:1360px;height:3px;background:#8b8f93"></div>
</body></html>
